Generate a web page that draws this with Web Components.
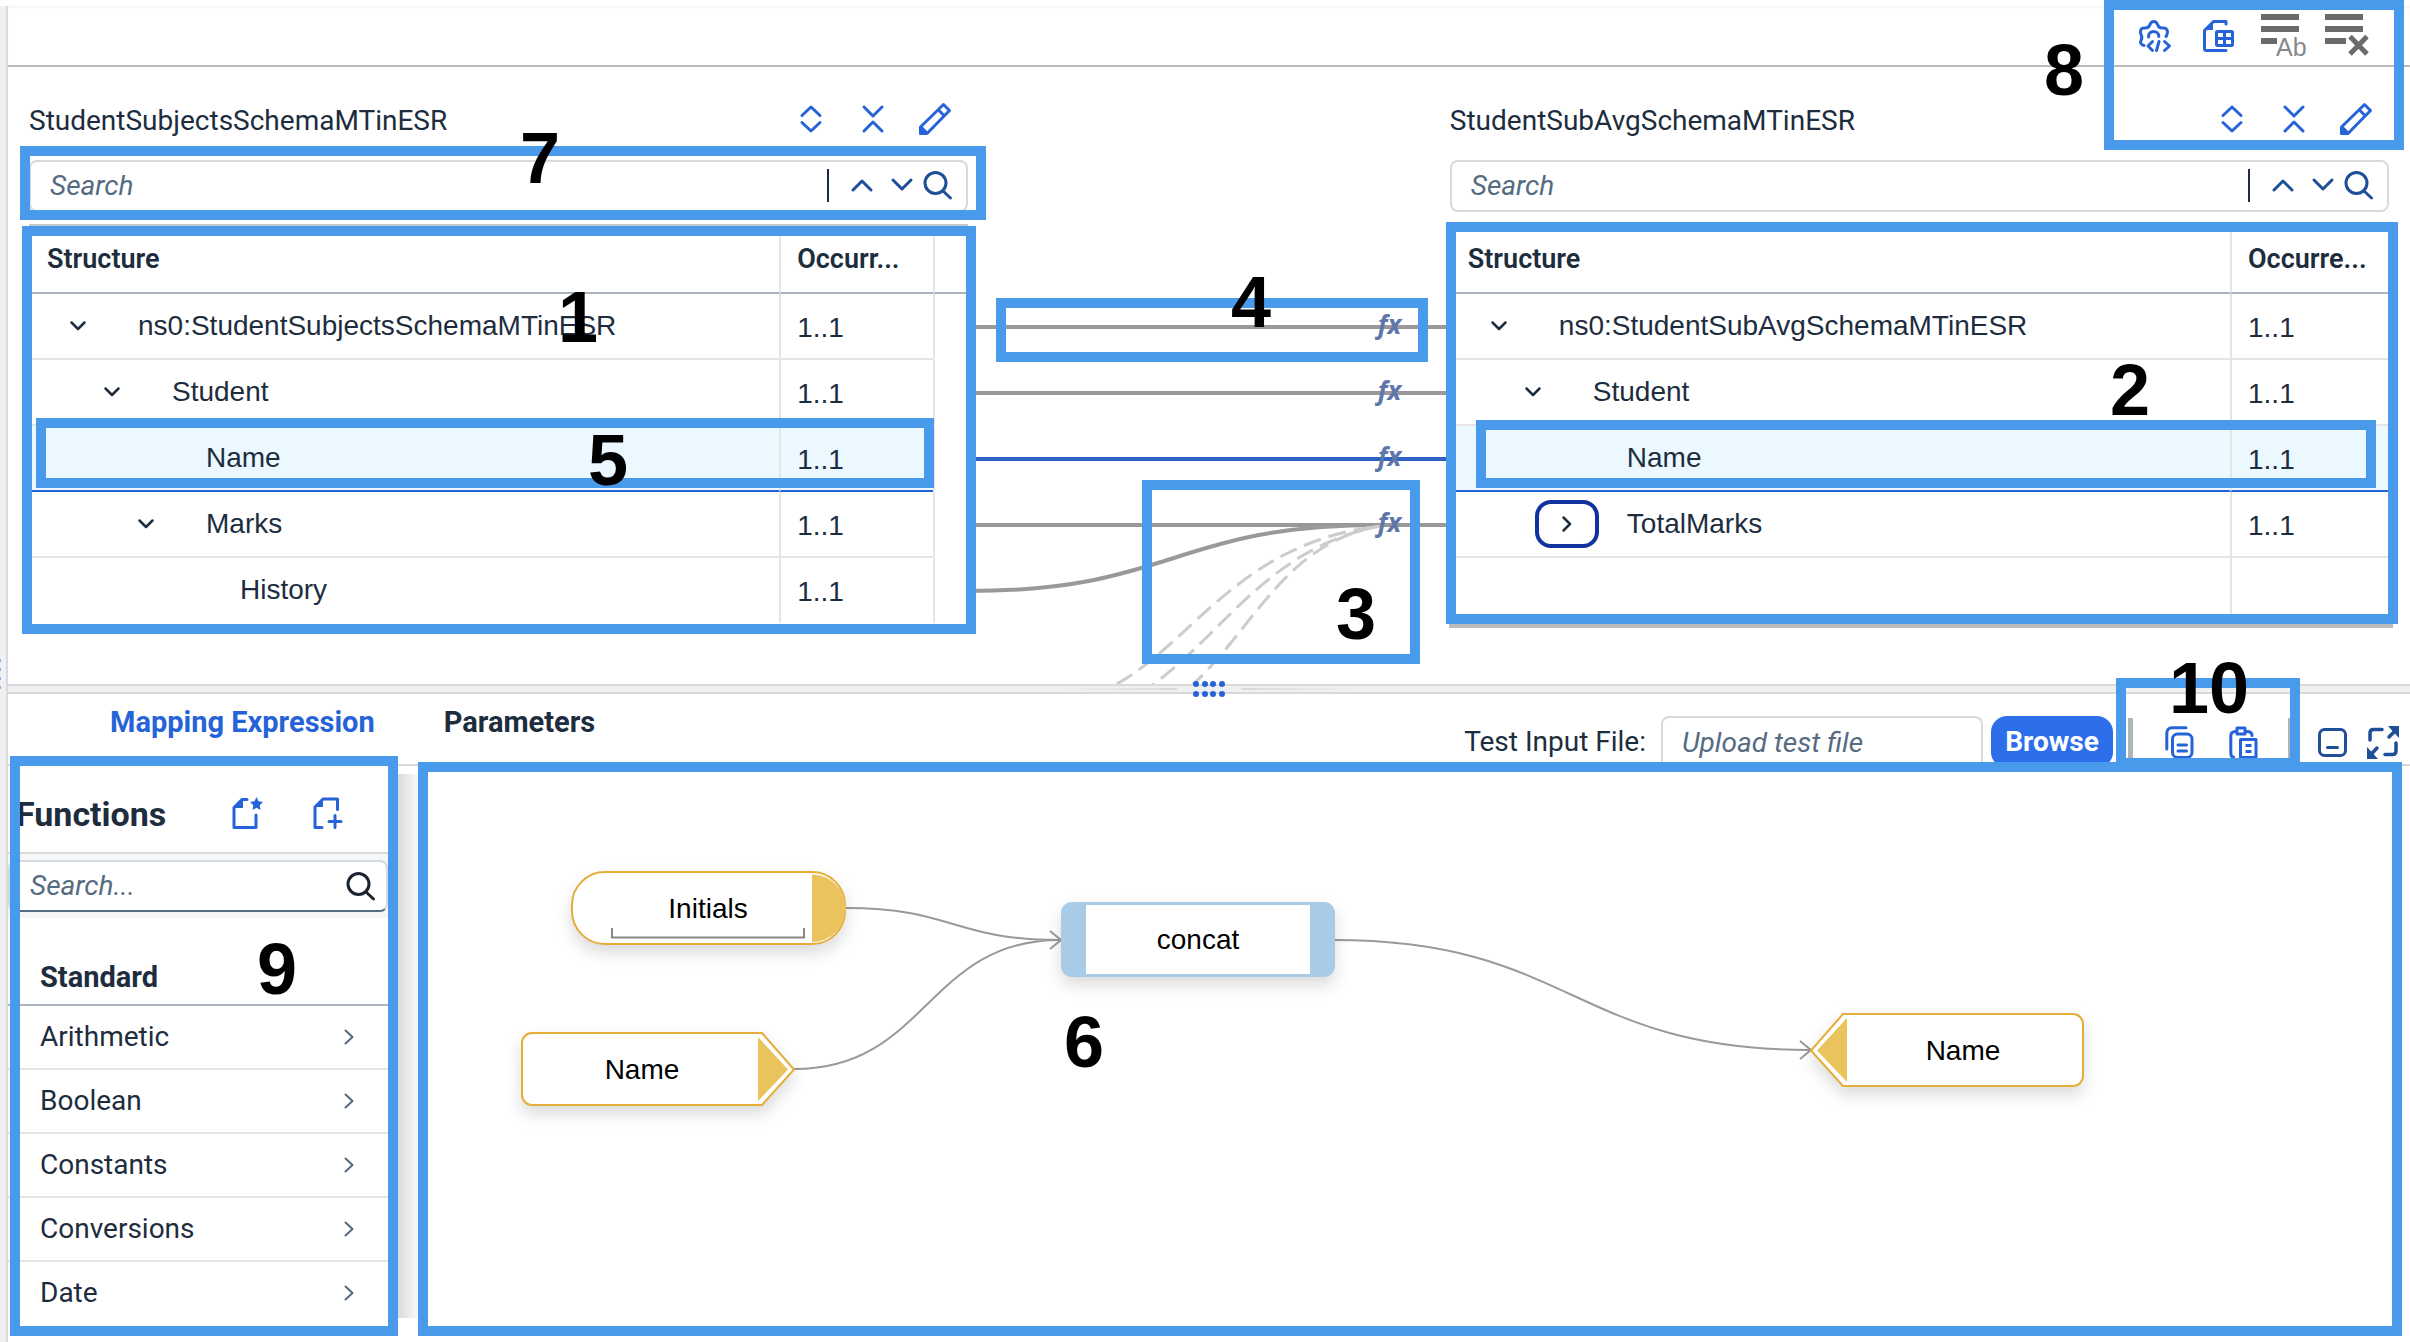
<!DOCTYPE html>
<html lang="en">
<head>
<meta charset="utf-8">
<title>Message Mapping</title>
<style>
  html, body { margin: 0; height: 100%; }
  body {
    --text: #1d2d3e; --muted: #556b82; --blue: #2763d8; --navy: #1e4f98;
    --line: #d9d9d9; --row: #e5e5e5; --mark: #4a9aeb;
    --ui: Roboto, "Open Sans", sans-serif;
    --cell: "Liberation Sans", Arial, sans-serif;
    font: 28px/40px var(--ui); color: var(--text); background: #fff;
    overflow: hidden;
  }
</style>
</head>
<body>
<mapping-app></mapping-app>
<script>
const stroke = (w = 3) => `fill="none" stroke="currentColor" stroke-width="${w}" stroke-linecap="round" stroke-linejoin="round"`;
const S = stroke();
const ICONS = {
  expand: [22, 28, `<g ${S}><path d="M2 10.500 11 2l9 8.500M2 17.500 11 26l9-8.500"/></g>`],
  collapse: [22, 28, `<g ${S}><path d="M2 2l9 9 9-9M2 26l9-9 9 9"/></g>`],
  pencil: [32, 32, `<g ${S}><path d="M1.500 30.500V24L24.500 1.500l6 6L8 30.500ZM19.500 7l5.500 5.500"/></g><path fill="currentColor" d="M1 31v-8l3 1 4 4v3Z"/>`],
  up: [22, 14, `<g ${S}><path d="M2 12l9-9 9 9"/></g>`],
  down: [22, 14, `<g ${S}><path d="M2 2l9 9 9-9"/></g>`],
  search: [29, 29, `<g ${S}><circle cx="12.500" cy="12" r="10.500"/><path d="M20 20l7.500 7"/></g>`],
  treeDown: [16, 10, `<g ${stroke(2.5)}><path d="M1.500 1.500 8 8l6.500-6.500"/></g>`],
  treeRight: [10, 16, `<g ${stroke(2.5)}><path d="M1.500 1.500 8 8l-6.500 6.500"/></g>`],
  next: [10, 16, `<g ${stroke(2)}><path d="M1.500 1.500 8.500 8l-7 6.500"/></g>`],
  gear: [32, 32, `<g ${S}><path d="M5 25.500C1.500 24.500 1 22.500 2 20.500 3.500 18 3.500 17 2 14.500 .5 11 2 8 5 8c3.500.500 5-.500 6-3.500 1.500-4 6-4 7.500 0 1 3 2.500 4 6 3.500 3.500 0 5 3.500 3.500 6.500L27 16.500M9.500 17C9 13.500 12 11.500 14.500 11.500S20 13 19.800 16.500M13.500 21.500 9 26l4.500 4.500M20 21.500 17.500 30.500M25.500 21.500 30.500 26l-5 4.500"/></g>`],
  sheet: [32, 32, `<g ${S}><path d="M23 4V1.500H10.500L1.500 10.500V28.500a2 2 0 0 0 2 2H23"/><rect x="13.500" y="11.500" width="16" height="14" rx="1"/><path d="M21.500 12v13M14 18.500h15"/></g><path fill="currentColor" d="M10 1v9H1Z"/>`],
  rename: [46, 44, `<g fill="#6a6a6a"><rect x="1" y="0" width="38" height="6"/><rect x="1" y="12" width="38" height="6"/><rect x="1" y="24" width="16" height="6"/></g><text x="16" y="42" font-family="Liberation Sans" font-size="25" fill="#888">Ab</text>`],
  clear: [46, 44, `<g fill="#6a6a6a"><rect x="1" y="0" width="38" height="6"/><rect x="1" y="12" width="38" height="6"/><rect x="1" y="24" width="21" height="6"/></g><path d="M26 22.500 43 40M43 22.500 26 40" fill="none" stroke="#6a6a6a" stroke-width="5"/>`],
  favDoc: [32, 32, `<g ${S}><path d="M15 2.500H10L2 10.500V30.500H24V18"/></g><path fill="currentColor" d="M11 2v9H2ZM24.500 0l2 4.300 4.500.700-3.300 3.300.800 4.700-4-2.200-4 2.200.800-4.700L18 5l4.500-.700Z"/>`],
  addDoc: [30, 32, `<g ${S}><path d="M9 30.500H2V10L10 2H24.500V12.500M22 18.500v12M16 24.500h12"/></g><path fill="currentColor" d="M10 1.500v8.500H1.500Z"/>`],
  copy: [29, 33, `<g ${S}><path d="M1.800 23V7a5 5 0 0 1 5-5.200H21"/><rect x="7.500" y="8" width="19.500" height="23.500" rx="5"/><path d="M13 19h8.500M13 25h8.500"/></g>`],
  paste: [29, 33, `<g ${S}><path d="M4.500 31Q1.800 31 1.800 27V10q0-4 4-4.500M18 5.500q5 0 5 4M8 2h8v6H8Z"/><path d="M11.500 13.500H27v18H11.500Z"/></g><path d="M16.500 19.500h6M16.500 25.500h6" stroke="currentColor" stroke-width="3"/>`],
  minimize: [29, 29, `<g ${S}><rect x="1.500" y="1.500" width="26" height="26" rx="5"/><path d="M9.500 19.500h10"/></g>`],
  full: [34, 33, `<g ${stroke(3.5)}><path d="M3 14V7q0-3.500 3.500-3.500H15M29 17v8q0 3.500-3.500 3.500H18M22 11l8-8M10 22l-7.500 8"/></g><path fill="currentColor" d="M21 0h11v12ZM0 21v12h11Z"/>`]
};
const icon = n => { const [w, h, b] = ICONS[n]; return `<svg width="${w}" height="${h}" viewBox="0 0 ${w} ${h}" aria-hidden="true">${b}</svg>`; };
const BASE = `<style>
  *, ::before, ::after { box-sizing: border-box; }
  svg { display: block; flex: none; overflow: visible; }
  button { display: flex; align-items: center; justify-content: center; padding: 0; border: 0; background: none; color: var(--blue); font: inherit; cursor: pointer; }
  input { font: inherit; color: inherit; border: 0; outline: 0; background: none; min-width: 0; padding: 0; }
  input::placeholder { color: var(--muted); font-style: italic; opacity: 1; }
</style>`;
const define = (name, view) => customElements.define(name, class extends HTMLElement {
  connectedCallback() {
    if (this.shadowRoot) return;
    this.attachShadow({ mode: 'open' }).innerHTML = BASE + view(this);
  }
});

/* Icon-only action */
define('icon-button', el => `<style>
  :host { display: flex; align-items: center; justify-content: center; width: 64px; flex: none; color: var(--blue); }
  button { color: inherit; width: 100%; height: 40px; }
</style><button type="button" aria-label="${el.getAttribute('label')}">${icon(el.getAttribute('icon'))}</button>`);

/* Numbered highlight lying over the screen */
define('call-out', () => `<style>
  :host { display: block; position: absolute; border: 10px solid var(--mark); pointer-events: none; box-sizing: border-box; }
</style><slot></slot>`);
define('call-number', () => `<style>
  :host { display: block; position: absolute; font: bold 72px/72px "Liberation Sans", Arial, sans-serif; color: #000; pointer-events: none; }
</style><slot></slot>`);

define('top-bar', () => `<style>
  :host { display: flex; align-items: center; justify-content: flex-end; height: 61px; padding-right: 31px; border-bottom: 2px solid #bbb; box-sizing: border-box; box-shadow: inset 0 2px 2px #f5f6f7; }
</style>
<icon-button icon="gear" label="Settings"></icon-button>
<icon-button icon="sheet" label="Export mapping"></icon-button>
<icon-button icon="rename" label="Rename"></icon-button>
<icon-button icon="clear" label="Clear"></icon-button>`);

define('schema-search', () => `<style>
  :host { display: flex; align-items: center; height: 52px; border: 2px solid #d5dade; border-radius: 8px; padding: 0 14px 2px 19px; }
  input { flex: 1; height: 44px; }
  i { width: 2px; height: 33px; background: var(--text); margin-right: 13px; }
  icon-button { width: 40px; color: var(--navy); }
  icon-button:last-child { width: 30px; }
</style>
<input type="search" placeholder="Search" aria-label="Search"><i></i>
<icon-button icon="up" label="Previous match"></icon-button>
<icon-button icon="down" label="Next match"></icon-button>
<icon-button icon="search" label="Search"></icon-button>`);

const TREES = {
  source: [['ns0:StudentSubjectsSchemaMTinESR', 0, 'down'], ['Student', 1, 'down'], ['Name', 2, '', 'sel'], ['Marks', 2, 'down'], ['History', 3, '']],
  target: [['ns0:StudentSubAvgSchemaMTinESR', 0, 'down'], ['Student', 1, 'down'], ['Name', 2, '', 'sel'], ['TotalMarks', 2, 'right'], null]
};
define('schema-tree', el => {
  const side = el.getAttribute('side'), src = side === 'source', extra = src ? '<td class="rest"></td>' : '';
  const rows = TREES[side].map(r => {
    if (!r) return `<tr class="last"><td></td><td class="occ"></td></tr>`;
    const [name, depth, tog, sel] = r;
    const btn = tog ? `<button type="button" class="${tog}" aria-label="Toggle ${name}">${icon(tog === 'down' ? 'treeDown' : 'treeRight')}</button>` : '<span class="gap"></span>';
    return `<tr class="${sel || ''} ${name === 'History' ? 'last' : ''}"><td><div class="node" style="--depth:${depth}">${btn}<span>${name}</span></div></td><td class="occ">1..1</td>${extra}</tr>`;
  }).join('');
  return `<style>
  :host { display: block; border-top: 2px solid #c4c9cd; }
  table { width: 100%; table-layout: fixed; border-collapse: separate; border-spacing: 0; }
  th { height: 68px; text-align: left; font-size: 27px; font-weight: 600; border-bottom: 2px solid #a9b4be; padding: 0 0 0 16px; }
  th:first-child { padding-left: 18px; }
  th + th, td + td { border-left: 2px solid var(--row); }
  .c2 { width: ${src ? 154 : 159}px; } .c3 { width: 35px; }
  td { height: 66px; padding: 0; font-family: var(--cell); border-bottom: 2px solid var(--row); }
  td.occ { padding: 4px 0 0 16px; }
  td.rest, .last td { border-bottom-color: transparent; }
  .sel td { background: #ebf8ff; border-bottom-color: var(--blue); }
  .sel td.rest { background: none; border-bottom-color: transparent; }
  .node { display: flex; align-items: center; padding-left: calc(17px + var(--depth) * 34px); }
  .node button, .gap { width: 64px; height: 48px; margin-right: 28px; color: var(--text); }
  .node button.right { border: 4px solid #1230a0; border-radius: 16px; }
</style>
<table><colgroup><col><col class="c2">${src ? '<col class="c3">' : ''}</colgroup>
<thead><tr><th>Structure</th><th>${src ? 'Occurr...' : 'Occurre...'}</th>${src ? '<th aria-label="Spare"></th>' : ''}</tr></thead>
<tbody>${rows}</tbody></table>`;
});

define('schema-pane', el => `<style>
  :host { display: block; min-width: 0; }
  header { display: flex; align-items: center; height: 40px; padding-right: 2px; margin-bottom: 21px; }
  h2 { flex: 1; margin: 0; padding-top: 3px; font: inherit; }
  icon-button { width: 62px; }
  schema-search { margin-bottom: 12px; }
</style>
<header><h2>${el.getAttribute('heading')}</h2>
<icon-button icon="expand" label="Expand all"></icon-button>
<icon-button icon="collapse" label="Collapse all"></icon-button>
<icon-button icon="pencil" label="Edit"></icon-button></header>
<schema-search></schema-search>
<schema-tree side="${el.getAttribute('side')}"></schema-tree>`);

/* Lines joining source fields to target fields */
define('mapping-links', () => `<style>
  :host { display: block; }
  svg { width: 100%; height: 585px; overflow: hidden; }
  text { font: italic bold 26px "Open Sans", sans-serif; fill: #5f76ab; }
</style>
<svg viewBox="968 99 482 585" preserveAspectRatio="none" aria-label="Field mappings">
  <g fill="none" stroke="#999" stroke-width="4">
    <path d="M968 327H1450M968 393H1450M968 525H1450"/>
    <path d="M968 591C1174 591 1174 525 1380 525"/>
    <path d="M968 459H1450" stroke="#2b62c4"/>
    <g stroke="#ccc" stroke-width="3" stroke-dasharray="18 8">
      <path d="M1117 684C1195 640 1240 543 1380 526"/>
      <path d="M1140 694C1222 640 1262 550 1380 526"/>
      <path d="M1170 704C1250 645 1275 545 1380 526"/>
    </g>
  </g>
  <text x="1378" y="334">fx</text><text x="1378" y="400">fx</text><text x="1378" y="466">fx</text><text x="1378" y="532">fx</text>
</svg>`);

define('split-bar', () => `<style>
  :host { display: flex; align-items: center; justify-content: center; gap: 16px; height: 10px; border: solid var(--line); border-width: 2px 0; background: #eff0f2; box-sizing: border-box; position: relative; z-index: 1; }
  i { width: 117px; height: 2px; background: linear-gradient(90deg, transparent, var(--line)); }
  svg + i { transform: scaleX(-1); }
</style><i></i>
<svg width="32" height="16" viewBox="0 0 32 16" fill="#2763d8"><circle cx="3" cy="3" r="3"/><circle cx="12" cy="3" r="3"/><circle cx="20" cy="3" r="3"/><circle cx="29" cy="3" r="3"/><circle cx="3" cy="13" r="3"/><circle cx="12" cy="13" r="3"/><circle cx="20" cy="13" r="3"/><circle cx="29" cy="13" r="3"/></svg><i></i>`);

define('expression-bar', () => `<style>
  :host { display: flex; align-items: flex-start; height: 72px; padding-left: 102px; border-bottom: 2px solid var(--line); box-sizing: border-box; }
  nav { display: flex; gap: 69px; flex: 1; }
  nav button { height: 56px; color: var(--text); font-size: 29px; font-weight: bold; }
  nav button[aria-selected=true] { color: var(--blue); }
  .tools { display: flex; align-items: center; height: 52px; margin-top: 22px; }
  label { margin-right: 15px; }
  #file { width: 322px; height: 52px; padding: 0 19px; border: 2px solid #d5dade; border-radius: 8px; margin-right: 8px; }
  .browse { width: 122px; height: 52px; border-radius: 16px; background: #2d6fea; color: #fff; font-weight: bold; margin-right: 15px; }
  i { width: 5px; height: 48px; background: #adb5b9; margin-right: 14px; }
  i.b { width: 3px; margin: 0 15px 0 13px; }
  .n { width: 52px; color: var(--navy); }
</style>
<nav role="tablist"><button role="tab" aria-selected="true">Mapping Expression</button><button role="tab" aria-selected="false">Parameters</button></nav>
<div class="tools"><label for="file">Test Input File:</label><input id="file" type="text" placeholder="Upload test file"><button type="button" class="browse">Browse</button><i></i>
<icon-button icon="copy" label="Copy"></icon-button><icon-button icon="paste" label="Paste"></icon-button><i class="b"></i>
<icon-button class="n" icon="minimize" label="Minimize"></icon-button><icon-button class="n" icon="full" label="Full screen"></icon-button></div>`);

define('function-list', () => `<style>
  :host { display: block; width: 380px; flex: none; background: #fff; position: relative; }
  :host::after { content: ""; position: absolute; left: 100%; top: 8px; width: 34px; height: 544px; background: linear-gradient(90deg, #ccc, #fff); }
  header { display: flex; align-items: center; height: 88px; padding: 8px 20px 0 8px; border-bottom: 2px solid var(--line); }
  h2 { flex: 1; margin: 0; padding-top: 2px; font-size: 34px; font-weight: bold; }
  icon-button { width: 80px; }
  .find { padding: 6px 0; background: #f5f6f7; }
  .box { display: flex; align-items: center; height: 52px; background: #fff; border: 2px solid #d5dade; border-bottom-color: var(--muted); border-radius: 8px; padding: 0 11px 0 20px; }
  .box input { flex: 1; }
  .box icon-button { width: 30px; color: #1a2430; }
  h3 { margin: 0; height: 88px; padding: 39px 0 0 32px; font-size: 29px; font-weight: bold; border-bottom: 2px solid #a9b4be; }
  ul { margin: 0; padding: 0; list-style: none; }
  li button { width: 100%; height: 64px; justify-content: space-between; padding: 0 34px 0 32px; color: var(--text); border-bottom: 2px solid var(--row); }
  li:last-child button { border-color: transparent; }
  li svg { color: var(--muted); }
</style>
<header><h2>Functions</h2><icon-button icon="favDoc" label="Favorite functions"></icon-button><icon-button icon="addDoc" label="Add function"></icon-button></header>
<div class="find"><div class="box"><input type="search" placeholder="Search..." aria-label="Search functions"><icon-button icon="search" label="Search"></icon-button></div></div>
<h3>Standard</h3>
<ul>${['Arithmetic', 'Boolean', 'Constants', 'Conversions', 'Date'].map(t => `<li><button type="button"><span>${t}</span>${icon('next')}</button></li>`).join('')}</ul>`);

const SHAPES = {
  constant: `<rect x="1" y="1" width="273" height="72" rx="33" fill="#fff" stroke="#e6ad3a" stroke-width="2"/><path d="M241 3.500a33 33 0 0 1 0 67.500Z" fill="#ebc35c"/><path d="M41 57v9.500H233V57" fill="none" stroke="#888" stroke-width="2"/>`,
  source: `<path d="M11 1H241L273 37.500 241 73H11A10 10 0 0 1 1 63V11A10 10 0 0 1 11 1Z" fill="#fff" stroke="#e6ad3a" stroke-width="2"/><path d="M237 5 267 37.500 237 69Z" fill="#ebc35c"/>`,
  target: `<path d="M263 1H33L1 37.500 33 73H263A10 10 0 0 0 273 63V11A10 10 0 0 0 263 1Z" fill="#fff" stroke="#e6ad3a" stroke-width="2"/><path d="M37 5 7 37.500 37 69Z" fill="#ebc35c"/>`,
  step: `<rect width="274" height="75" rx="11" fill="#a8cbe7"/><rect x="25" y="3" width="224" height="69" fill="#fff"/>`
};
define('flow-node', el => `<style>
  :host { display: block; position: absolute; width: 274px; height: 74px; }
  svg { position: absolute; inset: 0; filter: drop-shadow(0 8px 8px rgba(0,0,0,.14)); }
  div { position: relative; display: flex; align-items: center; justify-content: center; height: 76px; font-family: var(--cell); color: #000; }
  .source { padding-right: 32px; } .target { padding-left: 32px; }
</style><svg width="274" height="75" viewBox="0 0 274 75">${SHAPES[el.getAttribute('kind')]}</svg><div class="${el.getAttribute('kind')}"><slot></slot></div>`);

define('flow-canvas', () => `<style>
  :host { display: block; position: relative; flex: 1; min-width: 0; }
  .links { position: absolute; inset: 0; }
</style>
<svg class="links" width="2022" height="576" viewBox="388 766 2022 576" fill="none" stroke="#999" stroke-width="2">
  <path d="M846 908C953 908 953 940 1060 940M794 1069C927 1069 927 940 1060 940M1334 940C1572 940 1572 1050 1810 1050"/>
  <path d="M1050 931l11 9-11 9M1800 1041l11 9-11 9"/>
</svg>
<flow-node kind="constant" style="left:183px;top:105px">Initials</flow-node>
<flow-node kind="source" style="left:133px;top:266px">Name</flow-node>
<flow-node kind="step" style="left:673px;top:136px">concat</flow-node>
<flow-node kind="target" style="left:1422px;top:247px">Name</flow-node>`);

define('side-rail', () => `<style>
  :host { display: flex; align-items: center; width: 8px; flex: none; margin-top: 6px; background: #eff0f2; border-right: 2px solid var(--line); box-sizing: border-box; }
</style><svg width="2" height="30" viewBox="0 0 2 30" fill="#8ab0f0"><path d="M0 0h1v3H0zM0 9h1v3H0zM0 18h1v3H0zM0 27h1v3H0z"/></svg>`);

define('mapping-app', () => `<style>
  :host { display: flex; min-height: 100vh; position: relative; }
  main { flex: 1; min-width: 0; padding-top: 6px; display: flex; flex-direction: column; }
  .map { display: grid; grid-template-columns: 39fr 20fr 39fr; height: 617px; padding: 32px 21px 0; }
  .work { display: flex; flex: 1; }
  call-out, call-number { z-index: 2; }
</style>
<side-rail></side-rail>
<main>
  <top-bar></top-bar>
  <section class="map">
    <schema-pane side="source" heading="StudentSubjectsSchemaMTinESR"></schema-pane>
    <mapping-links></mapping-links>
    <schema-pane side="target" heading="StudentSubAvgSchemaMTinESR"></schema-pane>
  </section>
  <split-bar></split-bar>
  <expression-bar></expression-bar>
  <section class="work"><function-list></function-list><flow-canvas></flow-canvas></section>
</main>
<call-out style="left:20px;top:146px;width:966px;height:74px"></call-out>
<call-out style="left:22px;top:226px;width:954px;height:408px"></call-out>
<call-out style="left:36px;top:418px;width:898px;height:70px"></call-out>
<call-out style="left:996px;top:298px;width:432px;height:64px"></call-out>
<call-out style="left:1142px;top:480px;width:278px;height:184px"></call-out>
<call-out style="right:12px;top:222px;width:952px;height:402px;box-shadow:-1px 8px 0 -4px #bbb"></call-out>
<call-out style="right:34px;top:420px;width:900px;height:68px"></call-out>
<call-out style="right:6px;top:0;width:300px;height:150px"></call-out>
<call-out style="left:10px;top:756px;width:388px;height:580px"></call-out>
<call-out style="right:110px;top:678px;width:184px;height:90px"></call-out>
<call-out style="left:418px;right:8px;top:762px;height:574px"></call-out>
<call-number style="left:558px;top:281px">1</call-number>
<call-number style="right:260px;top:354px">2</call-number>
<call-number style="left:1336px;top:578px">3</call-number>
<call-number style="left:1231px;top:266px">4</call-number>
<call-number style="left:588px;top:424px">5</call-number>
<call-number style="left:1064px;top:1006px">6</call-number>
<call-number style="left:520px;top:122px">7</call-number>
<call-number style="right:326px;top:34px">8</call-number>
<call-number style="left:257px;top:933px">9</call-number>
<call-number style="right:161px;top:652px">10</call-number>`);
</script>
</body>
</html>
